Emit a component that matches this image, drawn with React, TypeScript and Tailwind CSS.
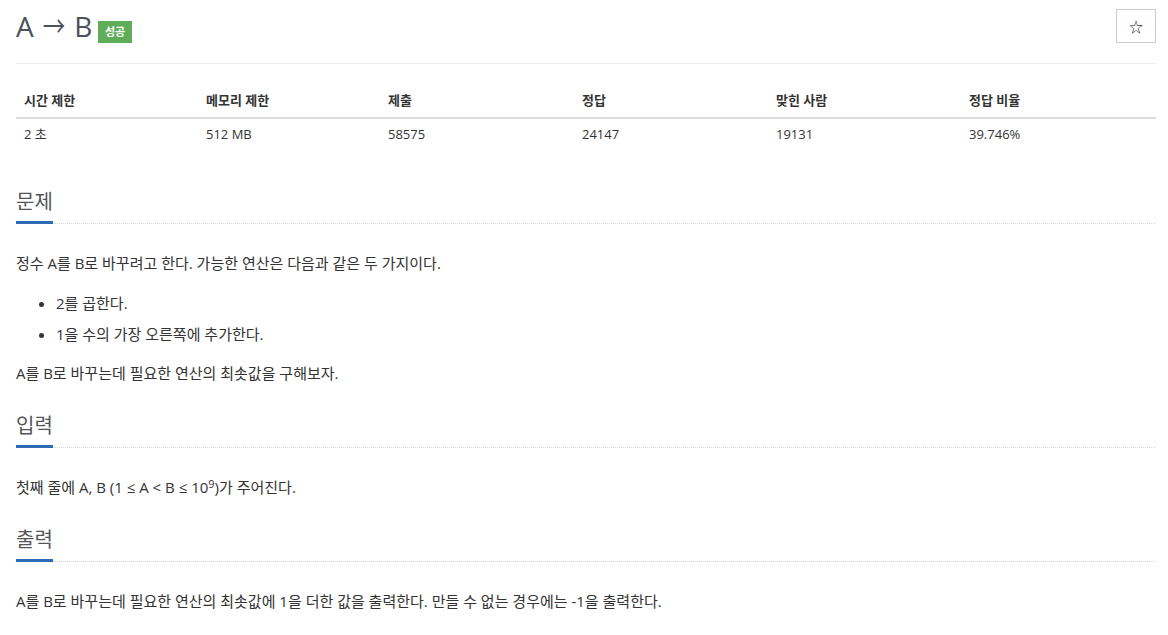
import React from 'react';

const font = { fontFamily: '"Open Sans", "Noto Sans CJK KR", sans-serif' };

const stats = [
  { label: '시간 제한', value: '2 초', w: 'w-[182px]' },
  { label: '메모리 제한', value: '512 MB', w: 'w-[182px]' },
  { label: '제출', value: '58575', w: 'w-[194px]' },
  { label: '정답', value: '24147', w: 'w-[194px]' },
  { label: '맞힌 사람', value: '19131', w: 'w-[193px]' },
  { label: '정답 비율', value: '39.746%', w: 'flex-1' },
];

const Headline = ({ children }: { children: React.ReactNode }) => (
  <div className="flex items-end border-b border-dotted border-[#d6d6d6]">
    <h2 className="-mb-[1px] border-b-[3px] border-[#2d6cb5] pb-[6px] text-[20px] leading-[26px] text-[#555]">
      {children}
    </h2>
  </div>
);

export default function App() {
  return (
    <div className="min-h-screen bg-white pl-4 pr-3 pt-[9px] text-[#333]" style={font}>
      {/* 제목 */}
      <div className="flex items-center justify-between">
        <div className="flex h-[34px] items-center gap-[6px]">
          <h1 className="text-[28px] leading-none tracking-[-0.5px] text-[#4b525c]">
            A <span className="inline-block scale-x-[0.8]">→</span> B
          </h1>
          <span className="mt-[12px] flex h-[22px] items-center bg-[#60ad59] px-[7px] text-[11px] font-bold text-white">
            성공
          </span>
        </div>
        <button className="flex h-[34px] w-[40px] items-center justify-center border border-[#ccc] bg-white text-[14px] text-[#222]">
          ☆
        </button>
      </div>

      <div className="mt-[20px] border-t border-[#eee]" />

      {/* 통계 */}
      <div className="mt-[21px] text-[13px]">
        <div className="flex h-[34px] items-center border-b-2 border-[#ddd] font-bold">
          {stats.map(s => (
            <div key={s.label} className={`${s.w} px-2`}>{s.label}</div>
          ))}
        </div>
        <div className="flex h-[32px] items-center">
          {stats.map(s => (
            <div key={s.label} className={`${s.w} px-2`}>{s.value}</div>
          ))}
        </div>
      </div>

      {/* 문제 */}
      <section className="mt-[38px]">
        <Headline>문제</Headline>
        <div className="mt-[27px] text-[15px] leading-[24px]">
          <p>정수 A를 B로 바꾸려고 한다. 가능한 연산은 다음과 같은 두 가지이다.</p>
          <ul className="mt-[13px] list-disc pl-[40px]">
            <li className="leading-[31px]">2를 곱한다.</li>
            <li className="leading-[31px]">1을 수의 가장 오른쪽에 추가한다.</li>
          </ul>
          <p className="mt-[11px]">A를 B로 바꾸는데 필요한 연산의 최솟값을 구해보자.</p>
        </div>
      </section>

      {/* 입력 */}
      <section className="mt-[28px]">
        <Headline>입력</Headline>
        <div className="mt-[27px] text-[15px] leading-[24px]">
          <p>
            첫째 줄에 A, B (1 ≤ A &lt; B ≤ 10<sup className="text-[11px]">9</sup>)가 주어진다.
          </p>
        </div>
      </section>

      {/* 출력 */}
      <section className="mt-[28px]">
        <Headline>출력</Headline>
        <div className="mt-[27px] text-[15px] leading-[24px]">
          <p>A를 B로 바꾸는데 필요한 연산의 최솟값에 1을 더한 값을 출력한다. 만들 수 없는 경우에는 -1을 출력한다.</p>
        </div>
      </section>
    </div>
  );
}
